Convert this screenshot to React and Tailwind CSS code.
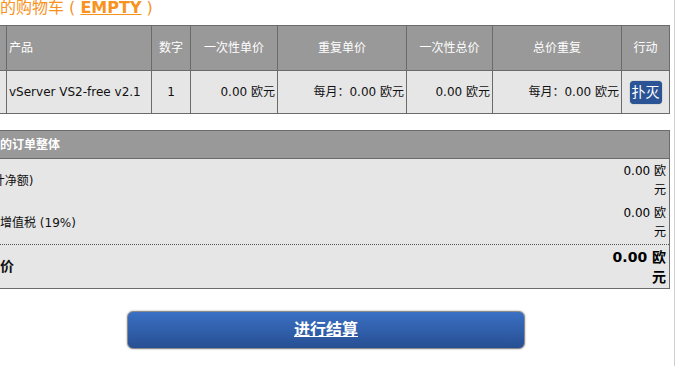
import React from "react";

const FONT = { fontFamily: "'DejaVu Sans', 'Noto Sans CJK SC', sans-serif" };

function Th({ children, left }) {
  return (
    <div
      className={`bg-[#999999] text-white text-[12px] flex items-center ${
        left ? "justify-start pl-[2px]" : "justify-center"
      }`}
    >
      {children}
    </div>
  );
}

function Td({ children, align = "right" }) {
  const a =
    align === "left"
      ? "justify-start pl-[2px]"
      : align === "center"
      ? "justify-center"
      : "justify-end pr-[2px]";
  return (
    <div className={`bg-[#e6e6e6] text-[#111] text-[12px] flex items-center ${a}`}>
      {children}
    </div>
  );
}

function Value({ bold }) {
  return (
    <div
      className={`text-right pr-[3px] ${
        bold ? "text-[14px] leading-[20px] font-bold" : "text-[12px] leading-[19px]"
      }`}
    >
      0.00 欧<br />元
    </div>
  );
}

export default function App() {
  return (
    <div className="w-[680px] h-[366px] overflow-hidden bg-white" style={FONT}>
      <div className="w-[675px] h-full border-r border-[#cfcfcf] overflow-hidden">
        <div className="-ml-[40px] w-[710px]">
          {/* Title */}
          <div className="-mt-[2px] h-[20px] ml-[24px] text-[16px] leading-[20px] text-[#f7931e] whitespace-nowrap">
            您的购物车 ({" "}
            <span className="font-bold underline">EMPTY</span> )
          </div>

          {/* Cart table */}
          <div className="mt-[7px] grid grid-cols-[45px_144px_38px_86px_128px_85px_128px_47px] grid-rows-[44px_42px] gap-px bg-[#6b6b6b] border border-[#6b6b6b]">
            <Th></Th>
            <Th left>产品</Th>
            <Th>数字</Th>
            <Th>一次性单价</Th>
            <Th>重复单价</Th>
            <Th>一次性总价</Th>
            <Th>总价重复</Th>
            <Th>行动</Th>

            <Td></Td>
            <Td align="left">vServer VS2-free v2.1</Td>
            <Td align="center">1</Td>
            <Td>0.00 欧元</Td>
            <Td>每月：0.00 欧元</Td>
            <Td>0.00 欧元</Td>
            <Td>每月：0.00 欧元</Td>
            <Td align="center">
              <span className="bg-[#2a5496] text-white text-[14px] leading-[19px] px-[2px] py-[2px] rounded-[4px] shadow-[0_0_1px_#555]">
                扑灭
              </span>
            </Td>
          </div>

          {/* Summary */}
          <div className="mt-[16px] border border-[#6b6b6b] bg-[#e6e6e6]">
            <div className="h-[28px] bg-[#999999] border-b border-[#6b6b6b] flex items-center pl-[27px] text-white text-[12px] font-bold">
              您的订单整体
            </div>
            <div className="h-[43px] flex items-center justify-between">
              <div className="pl-[15px] text-[12px] text-[#111]">(总计净额)</div>
              <Value />
            </div>
            <div className="h-[42px] flex items-center justify-between">
              <div className="pl-[15px] text-[12px] text-[#111]">加上增值税 (19%)</div>
              <Value />
            </div>
            <div className="h-[44px] flex items-center justify-between border-t border-dotted border-[#555]">
              <div className="pl-[25px] text-[14px] font-bold text-[#111]">总价</div>
              <Value bold />
            </div>
          </div>

          {/* Checkout button */}
          <div className="mt-[22px] ml-[167px] w-[398px] h-[38px] rounded-[6px] border border-[#8a8a8a] shadow-[0_0_2px_#999] bg-linear-to-b from-[#3b70c4] to-[#274f93] flex items-center justify-center">
            <span className="text-white text-[16px] font-bold underline">进行结算</span>
          </div>
        </div>
      </div>
    </div>
  );
}
